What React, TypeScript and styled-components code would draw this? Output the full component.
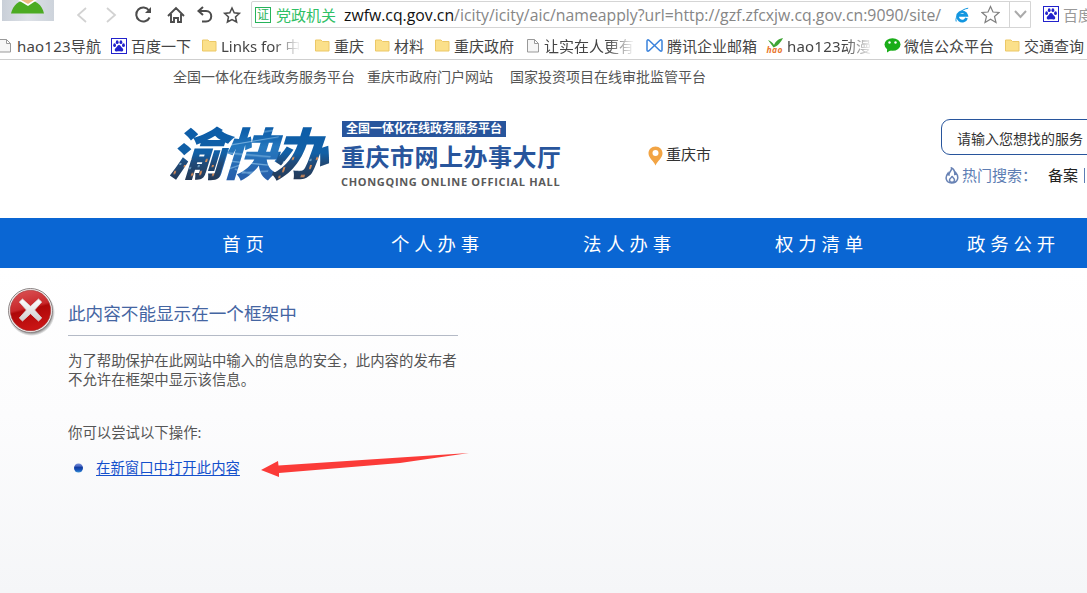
import React from "react";
import styled, { createGlobalStyle } from "styled-components";

const GlobalStyle = createGlobalStyle`
  *, *::before, *::after { box-sizing: border-box; }
  body {
    margin: 0;
    background: #fff;
    font-family: "Noto Sans", "Noto Sans CJK SC", sans-serif;
    overflow: hidden;
  }
  svg { display: block; flex: none; }
`;

const Page = styled.div`
  width: 1087px;
  height: 593px;
  overflow: hidden;
  display: flex;
  flex-direction: column;
`;

const Toolbar = styled.div`
  height: 30px;
  display: flex;
  align-items: flex-start;
  overflow: hidden;
`;

const Avatar = styled.div`
  width: 52px;
  height: 21px;
  flex: none;
  margin: 0 23px 0 2px;
  background: linear-gradient(90deg, #c9cfd8, #dde1e7 50%, #cdd3db);
  display: flex;
  justify-content: center;
`;

const NavButtons = styled.div`
  display: flex;
  flex: none;
  height: 30px;
  width: 174px;
`;

const AddressBar = styled.div`
  width: 780px;
  height: 27px;
  margin-top: 1px;
  border: 1px solid #d5d5d5;
  border-radius: 2px 0 0 2px;
  display: flex;
  align-items: center;
  flex: none;
  padding-left: 3px;
`;

const CertMark = styled.span`
  width: 16px;
  height: 16px;
  border: 1px solid #27b35a;
  color: #27b35a;
  font-size: 12px;
  line-height: 14px;
  display: flex;
  justify-content: center;
  margin-right: 5px;
`;

const CertName = styled.span`
  color: #2fc065;
  font-size: 15px;
  line-height: 24px;
  width: 68px;
  flex: none;
  white-space: nowrap;
`;

const Url = styled.span`
  color: #868686;
  width: 598px;
  flex: none;
  font-family: "Open Sans", "Noto Sans", sans-serif;
  font-size: 15.8px;
  line-height: 24px;
  white-space: nowrap;
  overflow: hidden;
`;

const Host = styled.span`
  color: #111;
`;

const AddressTools = styled.div`
  display: flex;
  align-items: center;
  margin-left: 13px;
  gap: 12px;
`;

const DropCell = styled.div`
  width: 21px;
  height: 25px;
  border-left: 1px solid #d5d5d5;
  display: flex;
  align-items: center;
  justify-content: center;
  margin-left: auto;
`;

const SearchEngine = styled.div`
  display: flex;
  flex: none;
  align-items: center;
  height: 28px;
  gap: 4px;
  padding-left: 12px;
  font-size: 15px;
  color: #999;
  white-space: nowrap;
`;

const BookmarkBar = styled.div`
  height: 30px;
  border-bottom: 1px solid #cfcfcf;
  display: flex;
  align-items: center;
  overflow: hidden;
  padding-top: 2px;
`;

const Bookmark = styled.div<{ $width: number; $gap: number }>`
  width: ${(p) => p.$width}px;
  flex: none;
  display: flex;
  align-items: center;
  gap: ${(p) => p.$gap}px;
`;

const BookmarkLabel = styled.span<{ $faded?: number; $spacing?: number }>`
  font-size: 15px;
  line-height: 22px;
  color: #444;
  white-space: nowrap;
  overflow: hidden;
  letter-spacing: ${(p) => p.$spacing ?? 0}px;
  ${(p) =>
    p.$faded
      ? `width: ${p.$faded}px; mask-image: linear-gradient(90deg, #000 ${p.$faded - 28}px, transparent);`
      : ""}
`;

const TopLinks = styled.div`
  display: flex;
  padding-left: 173px;
  height: 34px;
  align-items: center;
  font-size: 14px;
  line-height: 20px;
  color: #555;
`;

const TopLink = styled.span<{ $width: number }>`
  width: ${(p) => p.$width}px;
  white-space: nowrap;
`;

const Header = styled.div`
  height: 124px;
  display: flex;
  flex: none;
  padding: 24px 0 0 168px;
`;

const LogoMark = styled.svg`
  overflow: visible;
`;

const BrandText = styled.div`
  display: flex;
  flex-direction: column;
  align-items: flex-start;
  width: 306px;
  flex: none;
  margin-left: 10px;
  padding-top: 3px;
`;

const BrandTag = styled.span`
  width: 164px;
  height: 16px;
  background: #28559c;
  color: #fff;
  font-size: 12px;
  font-weight: 700;
  line-height: 16px;
  text-align: center;
  white-space: nowrap;
`;

const BrandTitle = styled.span`
  margin: 4px 0 0 -1px;
  font-size: 24px;
  letter-spacing: 0.5px;
  font-weight: 700;
  line-height: 32px;
  color: #28559c;
  white-space: nowrap;
`;

const BrandEnglish = styled.span`
  margin: 1px 0 0 -1px;
  font-family: "Open Sans", sans-serif;
  font-size: 11px;
  font-weight: 700;
  line-height: 15px;
  letter-spacing: 0.68px;
  color: #5a5a5a;
  white-space: nowrap;
`;

const City = styled.div`
  display: flex;
  width: 293px;
  flex: none;
  gap: 3px;
  padding-top: 28px;
  font-size: 15px;
  line-height: 17px;
  color: #333;
`;

const SearchArea = styled.div`
  width: 200px;
  flex: none;
  padding-top: 1px;
`;

const SearchField = styled.div`
  height: 36px;
  border: 1px solid #28559c;
  border-radius: 9px;
  padding-left: 15px;
  font-size: 14px;
  line-height: 37px;
  color: #333;
`;

const HotRow = styled.div`
  display: flex;
  align-items: center;
  margin: 9px 0 0 4px;
  font-size: 15px;
  line-height: 22px;
  color: #5d7db3;
  white-space: nowrap;
`;

const HotLabel = styled.span`
  width: 89px;
  padding-left: 3px;
`;

const HotItem = styled.span`
  color: #222;
  margin-right: 6px;
`;

const HotDivider = styled.i`
  width: 1px;
  height: 15px;
  background: #5d7db3;
`;

const MainNav = styled.nav`
  height: 50px;
  flex: none;
  background: #0a66d3;
  display: flex;
  padding-left: 149.5px;
`;

const MainNavItem = styled.a`
  width: 192px;
  flex: none;
  text-align: center;
  color: #fff;
  font-size: 18.4px;
  letter-spacing: 4.8px;
  line-height: 51px;
`;

const Content = styled.main`
  position: relative;
  flex: 1;
  display: flex;
  align-items: flex-start;
  padding: 19px 0 0 7px;
  background: linear-gradient(#ffffff, #fcfcfd 45%, #f5f6f8);
`;

const Message = styled.div`
  width: 390px;
  margin-left: 13px;
  color: #555;
  font-size: 14.4px;
  line-height: 19px;
`;

const MessageTitle = styled.h1`
  margin: 0 0 15px;
  height: 49px;
  padding-top: 14px;
  border-bottom: 1px solid #b4bac6;
  font-size: 17.6px;
  line-height: 25px;
  font-weight: 400;
  color: #4465a2;
  white-space: nowrap;
`;

const MessageLine = styled.p`
  margin: 0;
  white-space: nowrap;
`;

const Hint = styled.p`
  margin: 34px 0 16px;
`;

const Action = styled.div`
  display: flex;
  align-items: center;
  gap: 12px;
  padding-left: 6px;
`;

const ActionLink = styled.a`
  color: #1450cc;
  text-decoration: underline;
  text-underline-offset: 2px;
`;

const Arrow = styled.svg`
  position: absolute;
  left: 260px;
  top: 182px;
`;

const UserIcon = () => (
  <svg width="40" height="21" viewBox="0 0 40 21">
    <path d="M3 13.500 C5 5 11 0 19 0 C27 0 34 4 36 13.500 Z" fill="#4cab22" />
    <path d="M10 0 L20 6 L29 0 Z" fill="#fff" />
    <path d="M13 0 H26 L20 4 Z" fill="#edbb82" />
  </svg>
);

const BrowserIcons = () => (
  <svg width="174" height="30" viewBox="77 0 174 30" fill="none" stroke="#4c4c4c" strokeWidth="2">
    <path d="M86 8 L78 15 L86 22 M107 8 L115 15 L107 22" stroke="#d2d2d2" strokeWidth="1.8" />
    <path d="M149 10.5 A7 7 0 1 0 149.600 17.500" />
    <path d="M151 7 V13 H145 Z" fill="#4c4c4c" stroke="none" />
    <path d="M168 16 L176 8 L184 16 M171 14 V22 H174 V18 H178 V22 H181 V14" strokeWidth="1.900" />
    <path d="M203 7 L198.500 11 L203 15 M199 11 H206 C213 11 213 21.500 206 21.500 H202" />
    <path
      d="M232 8 L234.200 12.800 L239.400 13.400 L235.500 17 L236.600 22 L232 19.500 L227.400 22 L228.500 17 L224.600 13.400 L229.800 12.800 Z"
      strokeWidth="1.500"
    />
  </svg>
);

const StarIcon = () => (
  <svg width="19" height="19" viewBox="0 0 19 19" fill="none" stroke="#808080" strokeWidth="1.200">
    <path d="M9.500 1.500 L12 7 L18 7.500 L13.500 11.500 L15 17.500 L9.500 14.300 L4 17.500 L5.500 11.500 L1 7.500 L7 7 Z" />
  </svg>
);

const BrowserEIcon = () => (
  <svg width="14" height="16" viewBox="0 0 14 16" fill="none">
    <path d="M11.600 11 A4.600 4.600 0 1 1 11.700 8.400 H3.500" stroke="#1296e0" strokeWidth="2.700" />
    <path d="M1.200 14.500 C-0.500 10 6 2 13.200 1.200" stroke="#1296e0" strokeWidth="1" />
  </svg>
);

const ChevronIcon = () => (
  <svg width="13" height="9" viewBox="0 0 13 9" fill="none" stroke="#aaa" strokeWidth="2">
    <path d="M1 1 L6.500 7 L12 1" />
  </svg>
);

const FileIcon = () => (
  <svg width="12" height="14" viewBox="0 0 12 14" fill="#f6f6f6" stroke="#999">
    <path d="M0.500 0.500 H7.500 L11.500 4.500 V13 H0.500 Z M7.500 0.500 V4.500 H11.500" />
  </svg>
);

const FolderIcon = () => (
  <svg width="15" height="13" viewBox="0 0 15 13" fill="#fbe08a" stroke="#ecc866">
    <path d="M0.500 1 H6 L7.500 2.500 H14 V12 H0.500 Z" />
  </svg>
);

const PawIcon = () => (
  <svg width="16" height="16" viewBox="0 0 16 16" fill="#2222cc">
    <rect x="0.500" y="0.500" width="15" height="15" fill="#fff" stroke="#2222cc" />
    <ellipse cx="3.600" cy="7.200" rx="1.400" ry="1.900" />
    <ellipse cx="6.200" cy="4.200" rx="1.400" ry="1.900" />
    <ellipse cx="9.900" cy="4.200" rx="1.400" ry="1.900" />
    <ellipse cx="12.500" cy="7.200" rx="1.400" ry="1.900" />
    <path d="M8 7 C9.500 7 10 9 11.500 10.200 C13 11.500 12 13.800 10.300 13.600 C8.500 13.200 7.500 13.200 5.800 13.600 C4 13.800 3 11.500 4.500 10.200 C6 9 6.500 7 8 7 Z" />
  </svg>
);

const MailIcon = () => (
  <svg width="17" height="13" viewBox="0 0 17 13" fill="none" stroke="#3a82dc" strokeWidth="1.500" strokeLinejoin="round">
    <path d="M1 2 C1 0.800 2 0.500 3 1.300 L8.500 6.500 L14 1.300 C15 0.500 16 0.800 16 2 V11 C16 12.200 15 12.500 14 11.700 L8.500 6.500 L3 11.700 C2 12.500 1 12.200 1 11 Z" />
  </svg>
);

const HaoIcon = () => (
  <svg width="18" height="16" viewBox="0 0 18 16">
    <path d="M2 2 C5 3 7 5 8 7 C9 4 12 1 17 0 C15 4 12 8 7.500 9.500 C6 7 4 5 2 2 Z" fill="#3fa535" />
    <text x="0.500" y="15" fontFamily="Open Sans" fontSize="8.500" fontWeight="700" fontStyle="italic" fill="#e8762c" textLength="16">
      hao
    </text>
  </svg>
);

const ChatIcon = () => (
  <svg width="17" height="15" viewBox="0 0 17 15">
    <ellipse cx="8.500" cy="6.500" rx="8" ry="6.300" fill="#1aad19" />
    <path d="M3 11 L3 14.500 L7 12 Z" fill="#1aad19" />
    <circle cx="5.500" cy="4.500" r="1.200" fill="#fff" />
    <circle cx="11.500" cy="4.500" r="1.200" fill="#fff" />
  </svg>
);

const BrandLogo = () => (
  <LogoMark width="164" height="66" viewBox="168 118 164 66">
    <defs>
      <linearGradient id="sky" x1="0" y1="0" x2="0" y2="1">
        <stop offset="0" stopColor="#0b5ca9" />
        <stop offset="0.5" stopColor="#1260a6" />
        <stop offset="0.66" stopColor="#204a78" />
        <stop offset="1" stopColor="#26344c" />
      </linearGradient>
      <linearGradient id="river" x1="0" y1="0" x2="0" y2="1">
        <stop offset="0" stopColor="#0a5aa8" stopOpacity="0" />
        <stop offset="0.4" stopColor="#2478be" />
        <stop offset="1" stopColor="#2a5ba8" />
      </linearGradient>
      <pattern id="city" x="-20" y="-54" width="220" height="64" patternUnits="userSpaceOnUse">
        <rect width="220" height="64" fill="url(#sky)" />
        <rect x="71" width="52" height="64" fill="url(#river)" />
        <path
          d="M72 24 L118 16 M72 32 L116 36 M74 40 L116 44 M84 48 L112 56 M72 50 L88 44 M94 12 L120 8 M92 52 L118 50"
          stroke="#8fc3ea"
          strokeWidth="1.200"
          opacity="0.7"
        />
        <path
          d="M24 50h2v3h-2zM32 44h2v2h-2zM42 52h2v3h-2zM52 38h2v3h-2zM50 50h2v4h-2zM60 44h2v2h-2zM63 52h2v3h-2zM132 46h2v5h-2zM138 36h2v3h-2zM158 44h2v4h-2zM152 54h4v2h-4zM130 55h2v2h-2zM162 36h2v3h-2zM36 38h2v1h-2z"
          fill="#d58b58"
        />
        <path
          d="M27 42h2v2h-2zM38 46h2v2h-2zM46 44h2v2h-2zM56 52h2v2h-2zM130 40h2v2h-2zM156 38h2v2h-2zM148 48h2v2h-2zM164 48h2v2h-2z"
          fill="#6d9cc0"
        />
      </pattern>
    </defs>
    <g
      transform="translate(169 175) skewX(-17)"
      fontFamily="Noto Sans CJK SC"
      fontWeight="900"
      fontSize="56"
      fill="url(#city)"
    >
      <text x="-1" y="0">渝</text>
      <text x="51" y="0">快</text>
      <text x="101" y="0">办</text>
    </g>
  </LogoMark>
);

const PinIcon = () => (
  <svg width="15" height="20" viewBox="0 0 15 20">
    <path d="M7.500 0.500 C3.400 0.500 0.500 3.500 0.500 7.300 C0.500 12 5.500 15 7.500 19.500 C9.500 15 14.500 12 14.500 7.300 C14.500 3.500 11.600 0.500 7.500 0.500 Z" fill="#f2a444" />
    <circle cx="7.500" cy="7" r="3" fill="#fff" />
  </svg>
);

const FlameIcon = () => (
  <svg width="14" height="17" viewBox="0 0 14 17" fill="none" stroke="#6882b4" strokeWidth="1.500">
    <path d="M6.500 1 C7 4 3.500 5 4 8 C3 8 2.800 7 2.800 6.500 C0 10 0.500 15.500 6.500 16 C13.500 16 14 9.500 11 6 C11 7 10.500 7.500 9.800 7.500 C10 4.500 8.500 2 6.500 1 Z" />
    <path d="M7 9 C7 11 4.500 11 4.500 13 C4.500 16 9.500 16 9.500 13 C9.500 11.500 8 11 7 9 Z" />
  </svg>
);

const ErrorIcon = () => (
  <svg width="48" height="50" viewBox="0 0 48 50">
    <defs>
      <linearGradient id="ball" x1="0" y1="0" x2="0.25" y2="1">
        <stop offset="0" stopColor="#dc5558" />
        <stop offset="0.5" stopColor="#c8282b" />
        <stop offset="0.56" stopColor="#ae0809" />
        <stop offset="1" stopColor="#c81414" />
      </linearGradient>
      <linearGradient id="cross" x1="0" y1="0" x2="0" y2="1">
        <stop offset="0" stopColor="#ffffff" />
        <stop offset="1" stopColor="#cfcfcf" />
      </linearGradient>
      <radialGradient id="shade">
        <stop offset="0.85" stopColor="#000" stopOpacity="0.45" />
        <stop offset="1" stopColor="#000" stopOpacity="0" />
      </radialGradient>
    </defs>
    <circle cx="24.500" cy="25.500" r="23.500" fill="url(#shade)" />
    <circle cx="23.500" cy="23.500" r="22" fill="#f4f0f0" stroke="#8c8484" />
    <circle cx="23.500" cy="23.500" r="20.200" fill="url(#ball)" stroke="#a03030" strokeWidth="0.600" />
    <path
      d="M15.500 12 L23.500 19.300 L31.500 12 L34.700 15 L27.600 23 L34.700 31 L31.500 34 L23.500 26.700 L15.500 34 L12.300 31 L19.400 23 L12.300 15 Z"
      fill="url(#cross)"
      stroke="#ddd"
      strokeWidth="0.800"
      strokeLinejoin="round"
    />
  </svg>
);

const BulletIcon = () => (
  <svg width="10" height="10" viewBox="0 0 10 10">
    <defs>
      <linearGradient id="bead" x1="0" y1="0" x2="0" y2="1">
        <stop offset="0" stopColor="#7088d4" />
        <stop offset="0.3" stopColor="#4a68c4" />
        <stop offset="0.4" stopColor="#123a9e" />
        <stop offset="0.7" stopColor="#1550b8" />
        <stop offset="1" stopColor="#3c94d4" />
      </linearGradient>
    </defs>
    <circle cx="4.500" cy="5" r="4.500" fill="url(#bead)" />
  </svg>
);

type BookmarkEntry = {
  icon: React.ReactNode;
  label: string;
  width: number;
  gap: number;
  faded?: number;
  spacing?: number;
};

const bookmarks: BookmarkEntry[] = [
  { icon: <FileIcon />, label: "hao123导航", width: 112, gap: 6, spacing: 0.2 },
  { icon: <PawIcon />, label: "百度一下", width: 91, gap: 4 },
  { icon: <FolderIcon />, label: "Links for 中", width: 113, gap: 4, faded: 80 },
  { icon: <FolderIcon />, label: "重庆", width: 60, gap: 4 },
  { icon: <FolderIcon />, label: "材料", width: 60, gap: 4 },
  { icon: <FolderIcon />, label: "重庆政府", width: 92, gap: 4 },
  { icon: <FileIcon />, label: "让实在人更有", width: 119, gap: 5, faded: 91 },
  { icon: <MailIcon />, label: "腾讯企业邮箱", width: 120, gap: 4 },
  { icon: <HaoIcon />, label: "hao123动漫", width: 118, gap: 3, faded: 86, spacing: 0.2 },
  { icon: <ChatIcon />, label: "微信公众平台", width: 121, gap: 3 },
  { icon: <FolderIcon />, label: "交通查询", width: 90, gap: 4 },
];

const BookmarkList = styled.div`
  display: flex;
  margin-left: -1px;
`;

export default function App() {
  return (
    <Page>
      <GlobalStyle />
      <Toolbar>
        <Avatar>
          <UserIcon />
        </Avatar>
        <NavButtons>
          <BrowserIcons />
        </NavButtons>
        <AddressBar>
          <CertMark>证</CertMark>
          <CertName>党政机关</CertName>
          <Url>
            <Host>zwfw.cq.gov.cn</Host>/icity/icity/aic/nameapply?url=http://gzf.zfcxjw.cq.gov.cn:9090/site/
          </Url>
          <AddressTools>
            <BrowserEIcon />
            <StarIcon />
          </AddressTools>
          <DropCell>
            <ChevronIcon />
          </DropCell>
        </AddressBar>
        <SearchEngine>
          <PawIcon />
          百度
        </SearchEngine>
      </Toolbar>
      <BookmarkBar>
        <BookmarkList>
          {bookmarks.map((b) => (
            <Bookmark key={b.label} $width={b.width} $gap={b.gap}>
              {b.icon}
              <BookmarkLabel $faded={b.faded} $spacing={b.spacing}>
                {b.label}
              </BookmarkLabel>
            </Bookmark>
          ))}
        </BookmarkList>
      </BookmarkBar>
      <TopLinks>
        <TopLink $width={194}>全国一体化在线政务服务平台</TopLink>
        <TopLink $width={143}>重庆市政府门户网站</TopLink>
        <TopLink $width={196}>国家投资项目在线审批监管平台</TopLink>
      </TopLinks>
      <Header>
        <BrandLogo />
        <BrandText>
          <BrandTag>全国一体化在线政务服务平台</BrandTag>
          <BrandTitle>重庆市网上办事大厅</BrandTitle>
          <BrandEnglish>CHONGQING ONLINE OFFICIAL HALL</BrandEnglish>
        </BrandText>
        <City>
          <PinIcon />
          重庆市
        </City>
        <SearchArea>
          <SearchField>请输入您想找的服务</SearchField>
          <HotRow>
            <FlameIcon />
            <HotLabel>热门搜索：</HotLabel>
            <HotItem>备案</HotItem>
            <HotDivider />
          </HotRow>
        </SearchArea>
      </Header>
      <MainNav>
        {["首页", "个人办事", "法人办事", "权力清单", "政务公开"].map((t) => (
          <MainNavItem key={t}>{t}</MainNavItem>
        ))}
      </MainNav>
      <Content>
        <ErrorIcon />
        <Message>
          <MessageTitle>此内容不能显示在一个框架中</MessageTitle>
          <MessageLine>为了帮助保护在此网站中输入的信息的安全，此内容的发布者</MessageLine>
          <MessageLine>不允许在框架中显示该信息。</MessageLine>
          <Hint>你可以尝试以下操作:</Hint>
          <Action>
            <BulletIcon />
            <ActionLink>在新窗口中打开此内容</ActionLink>
          </Action>
        </Message>
        <Arrow width="210" height="30" viewBox="260 450 210 30">
          <polygon points="261,470 278,461 278.500,465.500 400,457.500 469,453 400,463 279,473 279,477" fill="#fb3b38" />
        </Arrow>
      </Content>
    </Page>
  );
}
